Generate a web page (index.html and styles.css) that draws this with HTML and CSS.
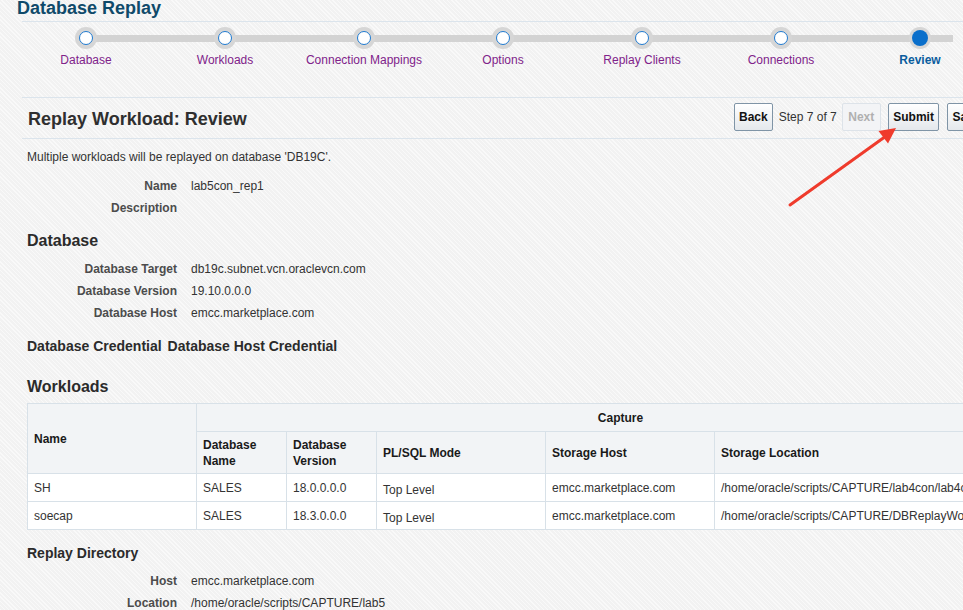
FILE: index.html
```html
<!DOCTYPE html>
<html lang="en">
<head>
<meta charset="utf-8">
<title>Database Replay</title>
<link rel="stylesheet" href="styles.css">
</head>
<body>
<div class="page">
  <h1 class="app-title">Database Replay</h1>

  <div class="train">
    <ol class="train-steps">
      <li class="step"><span class="node"><span class="dot"></span></span><span class="label">Database</span></li>
      <li class="step"><span class="node"><span class="dot"></span></span><span class="label">Workloads</span></li>
      <li class="step"><span class="node"><span class="dot"></span></span><span class="label">Connection Mappings</span></li>
      <li class="step"><span class="node"><span class="dot"></span></span><span class="label">Options</span></li>
      <li class="step"><span class="node"><span class="dot"></span></span><span class="label">Replay Clients</span></li>
      <li class="step"><span class="node"><span class="dot"></span></span><span class="label">Connections</span></li>
      <li class="step current"><span class="node"><span class="dot"></span></span><span class="label">Review</span></li>
    </ol>
  </div>

  <div class="page-header">
    <h2 class="page-title">Replay Workload: Review</h2>
    <div class="actions">
      <button class="btn">Back</button>
      <span class="step-count">Step 7 of 7</span>
      <button class="btn disabled">Next</button>
      <button class="btn">Submit</button>
      <button class="btn">Save</button>
    </div>
  </div>

  <div class="content">
    <p class="intro">Multiple workloads will be replayed on database 'DB19C'.</p>

    <dl class="form">
      <dt>Name</dt><dd>lab5con_rep1</dd>
      <dt>Description</dt><dd></dd>
    </dl>

    <h3 class="section">Database</h3>
    <dl class="form">
      <dt>Database Target</dt><dd>db19c.subnet.vcn.oraclevcn.com</dd>
      <dt>Database Version</dt><dd>19.10.0.0.0</dd>
      <dt>Database Host</dt><dd>emcc.marketplace.com</dd>
    </dl>

    <div class="creds">
      <span>Database Credential</span>
      <span>Database Host Credential</span>
    </div>

    <h3 class="section workloads">Workloads</h3>
    <table class="grid">
      <colgroup>
        <col class="c-name"><col class="c-dbname"><col class="c-dbver"><col class="c-mode"><col class="c-host"><col class="c-loc">
      </colgroup>
      <thead>
        <tr class="h1">
          <th rowspan="2" class="left">Name</th>
          <th colspan="5" class="center">Capture</th>
        </tr>
        <tr class="h2">
          <th>Database<br>Name</th>
          <th>Database<br>Version</th>
          <th>PL/SQL Mode</th>
          <th>Storage Host</th>
          <th>Storage Location</th>
        </tr>
      </thead>
      <tbody>
        <tr>
          <td>SH</td><td>SALES</td><td>18.0.0.0.0</td><td><span class="low">Top Level</span></td><td>emcc.marketplace.com</td><td>/home/oracle/scripts/CAPTURE/lab4con/lab4con_cap</td>
        </tr>
        <tr>
          <td>soecap</td><td>SALES</td><td>18.3.0.0.0</td><td><span class="low">Top Level</span></td><td>emcc.marketplace.com</td><td>/home/oracle/scripts/CAPTURE/DBReplayWorkload</td>
        </tr>
      </tbody>
    </table>

    <h4 class="subsection">Replay Directory</h4>
    <dl class="form">
      <dt>Host</dt><dd>emcc.marketplace.com</dd>
      <dt>Location</dt><dd>/home/oracle/scripts/CAPTURE/lab5</dd>
    </dl>
  </div>

  <svg class="annotation" width="963" height="610" viewBox="0 0 963 610" aria-hidden="true">
    <line x1="790" y1="205" x2="884" y2="137.5" stroke="#ef3b2c" stroke-width="3" stroke-linecap="round"/>
    <polygon points="896,128 888,143.5 878.5,131" fill="#ef3b2c"/>
  </svg>
</div>
</body>
</html>
```

FILE: styles.css
```css
html, body {
  margin: 0;
  padding: 0;
  overflow: hidden;
}

body {
  font-family: "Liberation Sans", Arial, Helvetica, sans-serif;
  font-size: 12px;
  color: #333;
  background-color: #f6f6f6;
  background-image: repeating-linear-gradient(45deg, #f9f9f9 0 1px, #f2f2f2 1px 3px);
  width: 963px;
  height: 610px;
}

.page {
  position: relative;
  width: 963px;
  height: 610px;
  overflow: hidden;
}

.app-title {
  margin: -4px 0 0 17px;
  font-size: 18px;
  line-height: 24px;
  font-weight: bold;
  color: #0f4a6a;
  height: 25px;
}

/* Train */
.train {
  margin-left: 22px;
  border-top: 1px solid #dbe4ec;
  border-bottom: 1px solid #dbe4ec;
  height: 75px;
  width: 1000px;
}

.train-steps {
  position: relative;
  list-style: none;
  margin: 0 0 0 -5.5px;
  padding: 5px 0 0;
  display: grid;
  grid-template-columns: repeat(7, 139px);
}

.train-steps::before {
  content: "";
  position: absolute;
  left: 69.5px;
  right: 69.5px;
  top: 13px;
  height: 7px;
  background: #d3d3d3;
}

.step {
  position: relative;
  display: flex;
  flex-direction: column;
  align-items: center;
}

.node {
  width: 22px;
  height: 22px;
  border-radius: 50%;
  background: #d6d6d6;
  display: flex;
  align-items: center;
  justify-content: center;
}

.dot {
  width: 12px;
  height: 12px;
  border-radius: 50%;
  background: #fff;
  border: 1.5px solid #1f7ad0;
}

.current .dot {
  width: 16px;
  height: 16px;
  border: 0;
  background: #0a6fcb;
}

.label {
  margin-top: 4px;
  font-size: 12px;
  line-height: 14px;
  color: #80228a;
  white-space: nowrap;
}

.current .label {
  font-weight: bold;
  color: #0b5d9e;
}

/* Page header */
.page-header {
  margin-left: 22px;
  height: 40px;
  border-bottom: 1px solid #dbe4ec;
  display: flex;
  align-items: center;
  width: 1000px;
}

.page-title {
  margin: 0;
  padding-left: 6px;
  flex: 0 0 712px;
  box-sizing: border-box;
  font-size: 18px;
  font-weight: bold;
  color: #2f2f2f;
  line-height: 22px;
  position: relative;
  top: 1px;
}

.actions {
  display: flex;
  align-items: center;
  position: relative;
  top: -1px;
}

.btn {
  font-family: inherit;
  font-size: 12px;
  font-weight: bold;
  color: #111;
  height: 28px;
  padding: 0 4px;
  margin: 0;
  border: 1px solid #7f94a6;
  border-radius: 2px;
  background: linear-gradient(#ffffff, #e4e8ec);
  box-sizing: border-box;
}

.btn.disabled {
  color: #b0b0b0;
  border-color: #dde3e9;
  background: #f3f4f6;
  padding: 0 5.5px;
}

.step-count {
  margin: 0 5px 0 6px;
  font-size: 12px;
  color: #333;
}

.actions .btn:nth-of-type(3) {
  margin-left: 7px;
  padding: 0 4.5px;
}

.actions .btn:nth-of-type(4) {
  margin-left: 8px;
}

/* Content */
.content {
  padding-left: 27px;
}

.intro {
  margin: 11px 0 0;
  line-height: 14px;
}

.form {
  display: grid;
  grid-template-columns: 150px 1fr;
  column-gap: 14px;
  grid-auto-rows: 22px;
  align-items: center;
  margin: 0;
}

.intro + .form {
  margin-top: 11px;
}

.form dt {
  text-align: right;
  font-weight: bold;
  color: #4c4c4c;
  white-space: nowrap;
}

.form dd {
  margin: 0;
  color: #333;
  white-space: nowrap;
}

.section {
  margin: 12px 0 0;
  font-size: 16px;
  line-height: 20px;
  font-weight: bold;
  color: #2b2b2b;
}

.section + .form {
  margin-top: 7px;
}

.creds {
  margin-top: 13px;
  display: flex;
  gap: 6px;
  font-size: 14px;
  line-height: 18px;
  font-weight: bold;
  color: #2b2b2b;
}

.section.workloads {
  margin-top: 22px;
}

/* Table */
.grid {
  margin-top: 6px;
  border-collapse: collapse;
  table-layout: fixed;
  width: 1017px;
  font-size: 12px;
}

.c-name { width: 169px; }
.c-dbname { width: 90px; }
.c-dbver { width: 90px; }
.c-mode { width: 169px; }
.c-host { width: 169px; }
.c-loc { width: 330px; }

.grid th,
.grid td {
  border: 1px solid #d8e1e8;
  padding: 0 6px;
  text-align: left;
  white-space: nowrap;
  overflow: hidden;
}

.grid th {
  background: #f2f4f6;
  font-weight: bold;
  color: #1a1a1a;
  line-height: 16px;
}

.grid th.center {
  text-align: center;
}

.grid .h1 th {
  height: 27px;
}

.grid .h2 th {
  height: 41px;
}

.grid td {
  background: #fff;
  height: 27px;
  line-height: 14px;
  color: #333;
}

.grid .low {
  position: relative;
  top: 2px;
}

.subsection {
  margin: 14px 0 0;
  font-size: 14px;
  line-height: 18px;
  font-weight: bold;
  color: #2b2b2b;
}

.subsection + .form {
  margin-top: 8px;
}

.annotation {
  position: absolute;
  left: 0;
  top: 0;
  pointer-events: none;
}
```
